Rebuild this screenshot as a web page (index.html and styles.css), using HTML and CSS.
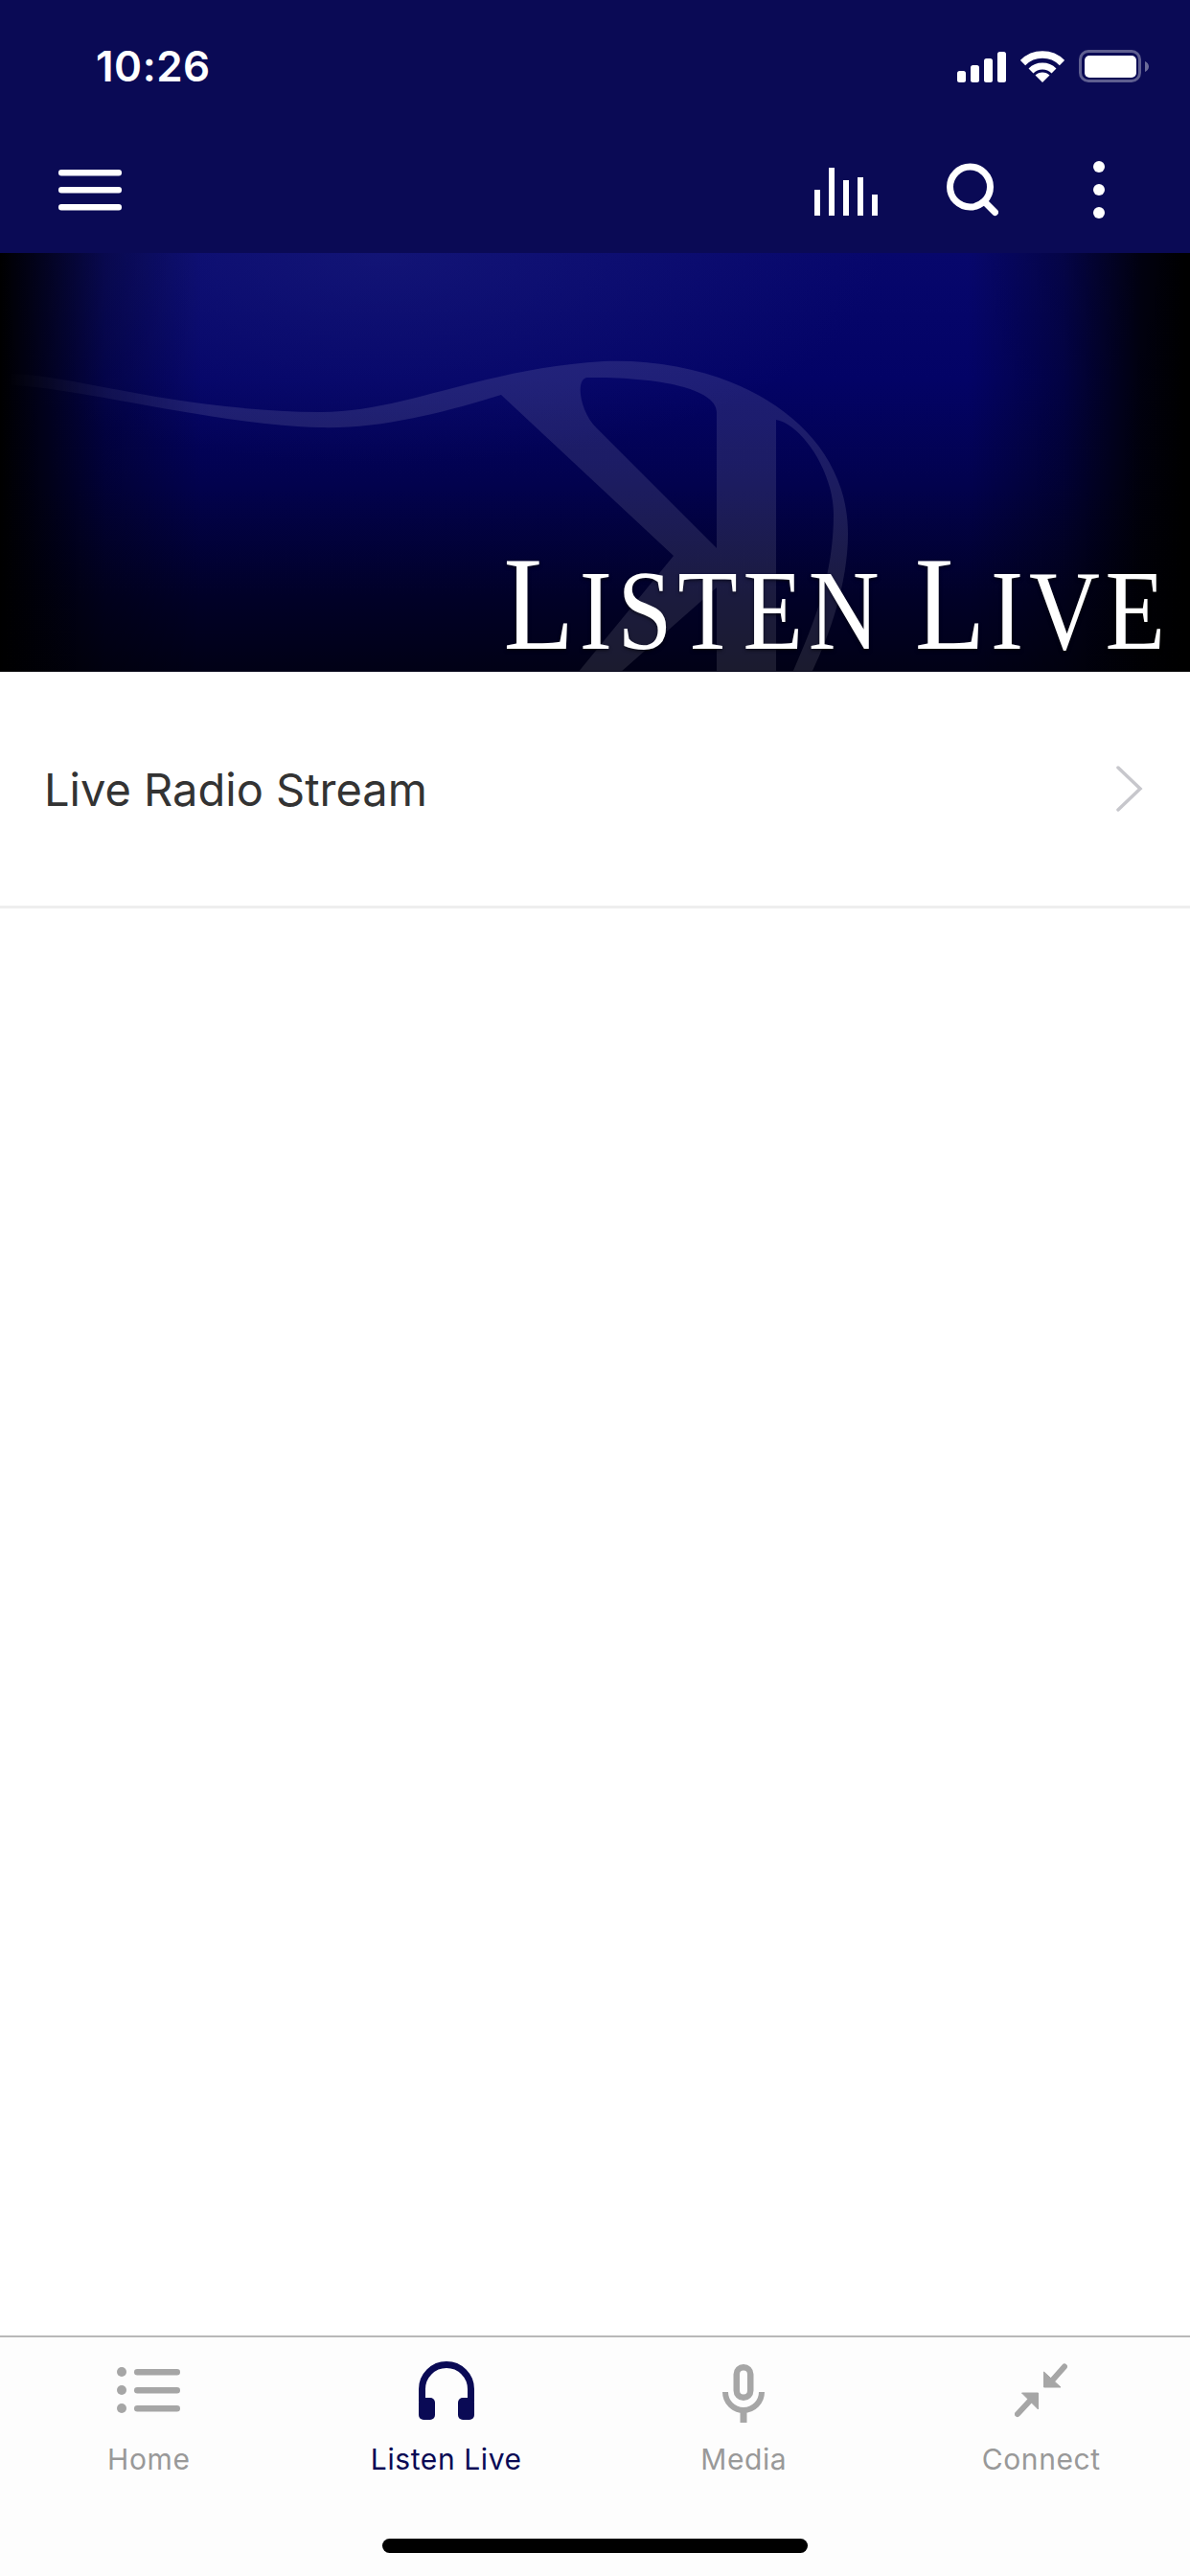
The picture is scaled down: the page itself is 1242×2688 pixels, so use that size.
FILE: index.html
```html
<!DOCTYPE html>
<html lang="en">
<head>
    <meta charset="UTF-8">
    <meta name="viewport" content="width=device-width, initial-scale=1.0">
    <title>Listen Live</title>
    <link rel="stylesheet" href="styles.css">
</head>
<body>
    <div class="app">
        <header class="top-bar">
            <div class="status">
                <span class="time">10:26</span>
                <div class="status-icons">
                    <svg width="51" height="32" viewBox="0 0 51 32" fill="#fff">
                        <rect x="0" y="20" width="9" height="12" rx="2.5"/>
                        <rect x="14" y="14" width="9" height="18" rx="2.5"/>
                        <rect x="28" y="7" width="9" height="25" rx="2.5"/>
                        <rect x="42" y="0" width="9" height="32" rx="2.5"/>
                    </svg>
                    <svg width="46" height="34" viewBox="0 0 46 34">
                        <path d="M2.5 13.5A29 29 0 0 1 43.5 13.5" fill="none" stroke="#fff" stroke-width="7.5"/>
                        <path d="M11 22A17 17 0 0 1 35 22" fill="none" stroke="#fff" stroke-width="7"/>
                        <path d="M23 34L15.5 26.5A10.6 10.6 0 0 1 30.5 26.5Z" fill="#fff"/>
                    </svg>
                    <svg width="73" height="34" viewBox="0 0 73 34">
                        <rect x="1.5" y="1.5" width="62" height="31" rx="8.5" fill="none" stroke="#fff" stroke-opacity="0.35" stroke-width="3"/>
                        <rect x="6" y="6" width="54" height="23" rx="5" fill="#fff"/>
                        <path d="M69 12C71.5 13 73 15 73 17.5S71.5 22 69 23Z" fill="#fff" fill-opacity="0.4"/>
                    </svg>
                </div>
            </div>
            <nav class="nav">
                <svg width="66" height="60" viewBox="0 0 66 60" fill="#fff">
                    <rect x="0" y="9" width="66" height="6.5" rx="3"/>
                    <rect x="0" y="27" width="66" height="6.5" rx="3"/>
                    <rect x="0" y="45" width="66" height="6.5" rx="3"/>
                </svg>
                <div class="nav-actions">
                    <div class="nav-btn">
                        <svg width="67" height="60" viewBox="0 0 67 60" fill="#fff">
                            <rect x="0" y="30" width="6" height="27"/>
                            <rect x="15" y="7" width="6" height="50"/>
                            <rect x="30" y="20" width="6" height="37"/>
                            <rect x="45" y="17" width="6" height="40"/>
                            <rect x="60" y="35" width="6" height="22"/>
                        </svg>
                    </div>
                    <div class="nav-btn">
                        <svg width="54" height="60" viewBox="0 0 54 60" fill="none" stroke="#fff" stroke-width="7" stroke-linecap="round">
                            <circle cx="24.5" cy="27" r="21"/>
                            <path d="M41 44L50.5 53.5"/>
                        </svg>
                    </div>
                    <div class="nav-btn">
                        <svg width="12" height="60" viewBox="0 0 12 60" fill="#fff">
                            <circle cx="6" cy="6" r="6"/>
                            <circle cx="6" cy="30" r="6"/>
                            <circle cx="6" cy="54" r="6"/>
                        </svg>
                    </div>
                </div>
            </nav>
        </header>

        <section class="hero">
            <svg class="hero-mark" width="1242" height="436" viewBox="0 264 1242 436">
                <path fill-rule="evenodd" d="M12 390C80 392 180 428 333 430C420 431 500 385 630 377C760 372 885 440 885 557C885 610 865 665 847 702L827 702C850 650 870 600 870 537C870 490 835 442 810 438L810 702L748 702L748 613L647 702L603 702L703 580L523 412C470 428 400 448 333 446C230 444 90 406 12 402ZM613 394C600 395 605 430 623 447L748 572L748 430C748 404 680 393 613 394Z"/>
            </svg>
            <h1 class="hero-title"><span class="big">L</span>ISTEN <span class="big">L</span>IVE</h1>
        </section>

        <main class="list">
            <div class="row">
                <span class="row-label">Live Radio Stream</span>
                <svg width="28" height="48" viewBox="0 0 28 48" fill="none" stroke="#c7c7cc" stroke-width="3.5" stroke-linecap="round">
                    <path d="M2 2L25 24L2 46"/>
                </svg>
            </div>
        </main>

        <footer class="tab-bar">
            <div class="tabs">
                <div class="tab">
                    <svg width="66" height="64" viewBox="0 0 66 64" fill="#a6a6a6">
                        <circle cx="5" cy="11" r="5"/>
                        <circle cx="5" cy="30" r="5"/>
                        <circle cx="5" cy="49" r="5"/>
                        <rect x="18" y="8" width="48" height="6.5" rx="3.2"/>
                        <rect x="18" y="27" width="48" height="6.5" rx="3.2"/>
                        <rect x="18" y="46" width="48" height="6.5" rx="3.2"/>
                    </svg>
                    <span class="tab-label">Home</span>
                </div>
                <div class="tab active">
                    <svg width="58" height="64" viewBox="0 0 58 64" fill="#0a0a55">
                        <path d="M3.5 42V29a25.5 25.5 0 0 1 51 0V42" fill="none" stroke="#0a0a55" stroke-width="7"/>
                        <rect x="0" y="38" width="17" height="23" rx="5"/>
                        <rect x="41" y="38" width="17" height="23" rx="5"/>
                    </svg>
                    <span class="tab-label">Listen Live</span>
                </div>
                <div class="tab">
                    <svg width="44" height="64" viewBox="0 0 44 64" fill="none" stroke="#a6a6a6">
                        <rect x="14.75" y="6.25" width="14.5" height="31.5" rx="7.25" stroke-width="6.5"/>
                        <path d="M3 32a19 19 0 0 0 38 0" stroke-width="6"/>
                        <path d="M22 50V64" stroke-width="7"/>
                    </svg>
                    <span class="tab-label">Media</span>
                </div>
                <div class="tab">
                    <svg width="55" height="64" viewBox="0 0 55 64" fill="#a6a6a6" stroke="#a6a6a6">
                        <path d="M30.5 11V27H48Z" stroke-width="1"/>
                        <path d="M52 5.5L40 19" stroke-width="6" stroke-linecap="round"/>
                        <path d="M7.5 33H24.5V50Z" stroke-width="1"/>
                        <path d="M3 55L16 41" stroke-width="6" stroke-linecap="round"/>
                    </svg>
                    <span class="tab-label">Connect</span>
                </div>
            </div>
            <div class="home-indicator"></div>
        </footer>
    </div>
</body>
</html>
```

FILE: styles.css
```css
body {
    margin: 0;
    background-color: #fff;
    font-family: 'Inter', 'Noto Sans', sans-serif;
}

svg {
    display: block;
    flex-shrink: 0;
}

.app {
    display: flex;
    flex-direction: column;
    width: 1242px;
    height: 2688px;
}

.top-bar {
    height: 264px;
    box-sizing: border-box;
    padding-top: 52px;
    background-color: #0a0a55;
}

.status {
    display: flex;
    justify-content: space-between;
    align-items: center;
    height: 34px;
    padding: 0 43px 0 100px;
}

.time {
    color: #fff;
    font-size: 44px;
    font-weight: 600;
    line-height: 34px;
    letter-spacing: 0.5px;
}

.status-icons {
    display: flex;
    align-items: flex-end;
    gap: 15px;
}

.nav {
    display: flex;
    justify-content: space-between;
    align-items: center;
    margin-top: 82px;
    padding: 0 29px 0 61px;
}

.nav-actions {
    display: flex;
}

.nav-btn {
    display: flex;
    justify-content: center;
    width: 132px;
}

.hero {
    position: relative;
    display: flex;
    justify-content: flex-end;
    align-items: flex-end;
    height: 437px;
    background:
        linear-gradient(90deg, #000 0, rgba(0, 0, 0, 0.75) 40px, rgba(0, 0, 0, 0.3) 110px, rgba(0, 0, 0, 0) 210px, rgba(0, 0, 0, 0) 1010px, rgba(0, 0, 0, 0.35) 1110px, rgba(0, 0, 0, 0.85) 1190px, #000 1236px),
        radial-gradient(ellipse 520px 220px at 400px 0, rgba(32, 36, 130, 0.45), rgba(32, 36, 130, 0)),
        linear-gradient(180deg, #07076c 0, #030366 30%, #02024e 55%, #010128 82%, #010116 100%);
}

.hero-mark {
    position: absolute;
    top: 0;
    left: 0;
    fill: #fff;
    opacity: 0.1;
    -webkit-mask-image: linear-gradient(90deg, rgba(0, 0, 0, 0) 0, #000 220px);
    mask-image: linear-gradient(90deg, rgba(0, 0, 0, 0) 0, #000 220px);
}

.hero-title {
    position: relative;
    margin: 0 20px 1px 0;
    color: #fff;
    font-family: 'Liberation Serif', serif;
    font-size: 119px;
    font-weight: 400;
    line-height: 1;
    letter-spacing: 6.7px;
    white-space: nowrap;
    transform: scaleX(0.86);
    transform-origin: right bottom;
    text-shadow: 0 2px 4px rgba(0, 0, 0, 0.5);
}

.big {
    font-size: 140px;
}

.list {
    flex: 1;
}

.row {
    display: flex;
    justify-content: space-between;
    align-items: center;
    height: 247px;
    padding: 0 49px 0 46px;
    box-sizing: border-box;
    border-bottom: 3px solid #eeeeee;
}

.row-label {
    color: #333;
    font-size: 47px;
}

.tab-bar {
    height: 251px;
    box-sizing: border-box;
    border-top: 2px solid #b8b8b8;
    background-color: #fdfdfd;
}

.tabs {
    display: grid;
    grid-template-columns: repeat(4, 1fr);
    padding-top: 25px;
}

.tab {
    display: flex;
    flex-direction: column;
    align-items: center;
    gap: 20px;
}

.tab-label {
    color: #999;
    font-size: 30px;
    line-height: 36px;
    letter-spacing: 0.6px;
}

.tab.active .tab-label {
    color: #0a0a55;
}

.home-indicator {
    width: 444px;
    height: 15px;
    margin: 65px auto 0;
    border-radius: 8px;
    background-color: #000;
}
```
